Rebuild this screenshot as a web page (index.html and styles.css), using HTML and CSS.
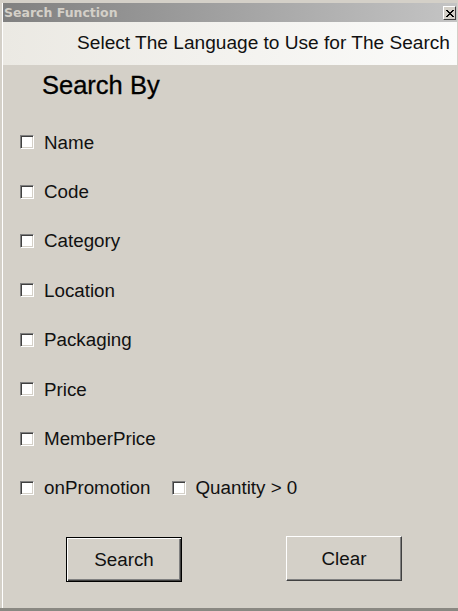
FILE: index.html
```html
<!DOCTYPE html>
<html>
<head>
<meta charset="utf-8">
<link rel="stylesheet" href="styles.css">
</head>
<body>
<div class="window">
  <div class="frame">
    <div class="titlebar">
      <span class="title">Search Function</span>
      <span class="close"><svg width="8" height="7" viewBox="0 0 8 7"><path d="M0 0h2v1h1v1h2V1h1V0h2v1H7v1H6v1H5v1h1v1h1v1h1v1H6V6H5V5H3v1H2v1H0V6h1V5h1V4h1V3H2V2H1V1H0z" fill="#000"/></svg></span>
    </div>
    <div class="header">Select The Language to Use for The Search</div>
    <div class="content">
      <div class="heading">Search By</div>
      <div class="options">
        <label class="row"><span class="check"></span><span class="label">Name</span></label>
        <label class="row"><span class="check"></span><span class="label">Code</span></label>
        <label class="row"><span class="check"></span><span class="label">Category</span></label>
        <label class="row"><span class="check"></span><span class="label">Location</span></label>
        <label class="row"><span class="check"></span><span class="label">Packaging</span></label>
        <label class="row"><span class="check"></span><span class="label">Price</span></label>
        <label class="row"><span class="check"></span><span class="label">MemberPrice</span></label>
        <div class="row">
          <label class="pair"><span class="check"></span><span class="label">onPromotion</span></label>
          <label class="pair second"><span class="check"></span><span class="label">Quantity &gt; 0</span></label>
        </div>
      </div>
      <div class="buttons">
        <button class="btn default">Search</button>
        <button class="btn clear">Clear</button>
      </div>
    </div>
  </div>
</div>
</body>
</html>
```
FILE: styles.css
```css
html, body {
  margin: 0;
  padding: 0;
  background: #d4d0c8;
}
.window {
  width: 458px;
  height: 611px;
  box-sizing: border-box;
  background: #d4d0c8;
  padding: 3px 1px 0 2px;
  border-bottom: 3px solid #8a8882;
  display: flex;
  flex-direction: column;
  font-family: "Liberation Sans", Arial, sans-serif;
}
.frame {
  flex: 1;
  border-left: 1px solid #ffffff;
  display: flex;
  flex-direction: column;
}
.titlebar {
  height: 19px;
  background: linear-gradient(to right, #808080, #c4c4c4);
  display: flex;
  align-items: center;
  justify-content: space-between;
  padding: 0 1px 0 1px;
}
.title {
  color: #d4d0c8;
  font-weight: bold;
  font-size: 12.5px;
  font-family: "DejaVu Sans", Verdana, sans-serif;
}
.close {
  width: 11px;
  height: 12px;
  margin-top: 1px;
  background: #d4d0c8;
  border-top: 1px solid #fff;
  border-left: 1px solid #fff;
  border-right: 1px solid #404040;
  border-bottom: 1px solid #404040;
  display: flex;
  align-items: center;
  justify-content: center;
}
.header {
  height: 43px;
  box-sizing: border-box;
  background: linear-gradient(to right, #ebe9e3, #fbfbfa);
  text-align: right;
  padding: 10px 7px 0 0;
  font-size: 19.1px;
  line-height: 22px;
  color: #111;
}
.content {
  display: flex;
  flex-direction: column;
}
.heading {
  margin-top: 8px;
  margin-left: 39px;
  font-size: 25.5px;
  line-height: 24px;
  color: #000;
  -webkit-text-stroke: 0.3px #000;
}
.options {
  margin-top: 21px;
  display: flex;
  flex-direction: column;
}
.row {
  height: 49.4px;
  display: flex;
  align-items: center;
  padding-left: 17px;
}
.pair {
  display: flex;
  align-items: center;
}
.pair.second {
  margin-left: 21px;
}
.check {
  width: 14px;
  height: 14px;
  box-sizing: border-box;
  background: #fff;
  border-top: 1px solid #808080;
  border-left: 1px solid #808080;
  border-right: 1px solid #fff;
  border-bottom: 1px solid #fff;
  box-shadow: inset 1px 1px 0 #404040, inset -1px -1px 0 #d4d0c8;
  margin-top: -1px;
}
.label {
  margin-left: 10px;
  font-size: 18.8px;
  color: #111;
}
.buttons {
  margin-top: 23px;
  display: flex;
  padding-left: 63px;
  gap: 104px;
}
.btn {
  width: 116px;
  height: 45px;
  box-sizing: border-box;
  background: #d4d0c8;
  font-family: "Liberation Sans", Arial, sans-serif;
  font-size: 18.8px;
  color: #111;
  padding: 0;
  border-top: 1px solid #fff;
  border-left: 1px solid #fff;
  border-right: 1px solid #404040;
  border-bottom: 1px solid #404040;
  box-shadow: inset -1px -1px 0 #808080;
}
.btn.default {
  border: 1px solid #000;
  box-shadow: inset 1px 1px 0 #fff, inset -1px -1px 0 #404040, inset -2px -2px 0 #808080;
  margin-top: 1px;
}
```
